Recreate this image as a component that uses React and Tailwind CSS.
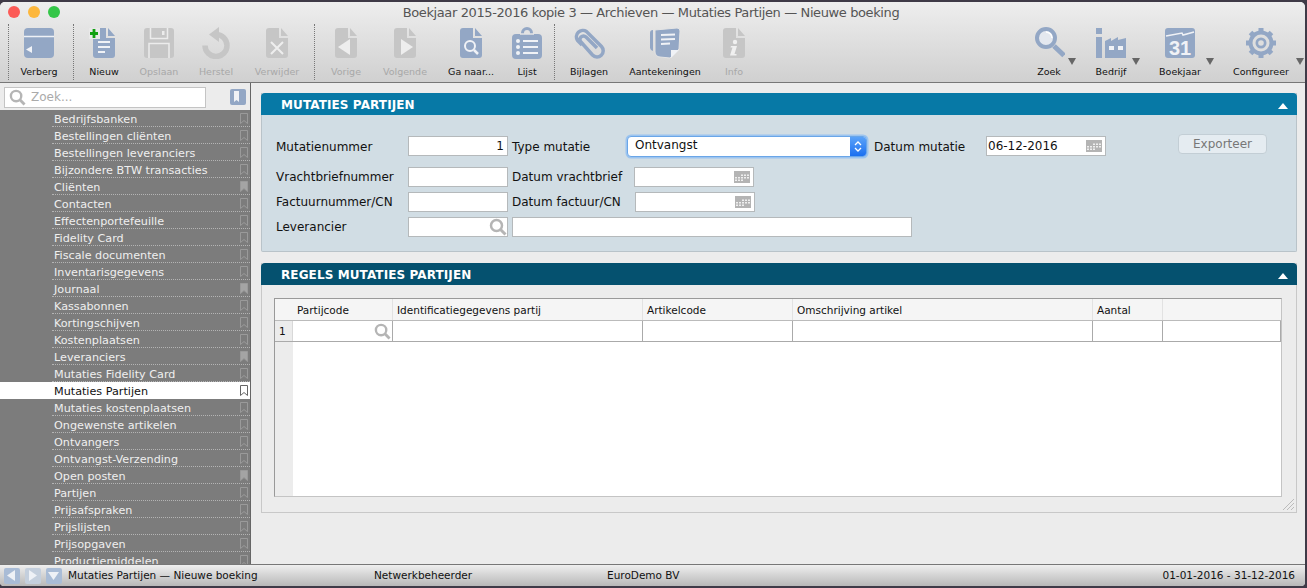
import React from "react";

const BLUE = "#93a7c5";
const GREY = "#c6c6c6";

const Doc = ({ c, children }) => (
  <svg width="32" height="32" viewBox="0 0 32 32">
    <path d="M8 1h10v10h9v17a3 3 0 0 1-3 3H8a3 3 0 0 1-3-3V4a3 3 0 0 1 3-3z" fill={c} />
    <path d="M20 1l7 8h-7z" fill={c} />
    {children}
  </svg>
);

const icons = {
  verberg: (
    <svg width="32" height="32" viewBox="0 0 32 32">
      <rect x="1" y="1" width="30" height="30" rx="4" fill={BLUE} />
      <path d="M1 9.500h30" stroke="#eef1f6" strokeWidth="1.500" />
      <path d="M9 19v7l-6-3.500z" fill="#f1f3f7" />
    </svg>
  ),
  nieuw: (
    <svg width="38" height="32" viewBox="0 0 38 32">
      <path d="M11 1h10v10h9v17a3 3 0 0 1-3 3H11a3 3 0 0 1-3-3V4a3 3 0 0 1 3-3z" fill={BLUE} />
      <path d="M23 1l7 8h-7z" fill={BLUE} />
      <rect x="4" y="1" width="11" height="11" fill="#e9e9e9" />
      <path d="M9 2v9M5 6.500h8" stroke="#12a012" strokeWidth="2.800" />
      <path d="M13 15h12M13 20h12M13 25h7" stroke="#f0f2f6" strokeWidth="2" />
    </svg>
  ),
  opslaan: (
    <svg width="32" height="32" viewBox="0 0 32 32">
      <path d="M4 1h24a3 3 0 0 1 3 3v24a3 3 0 0 1-3 3H4a3 3 0 0 1-3-3V4a3 3 0 0 1 3-3z" fill={GREY} />
      <path d="M7.500 1v10.500h17V1" fill="none" stroke="#ececec" strokeWidth="1.500" />
      <path d="M19 4h2.500v4H19z" fill="#ececec" />
      <path d="M6 31V16.500h20V31" fill="none" stroke="#ececec" strokeWidth="1.500" />
    </svg>
  ),
  herstel: (
    <svg width="32" height="32" viewBox="0 0 32 32">
      <path d="M16 7.500a11 11 0 1 1-11 11" fill="none" stroke={GREY} strokeWidth="5.500" />
      <path d="M19 0v15L9 7.500z" fill={GREY} />
    </svg>
  ),
  verwijder: (
    <Doc c={GREY}>
      <path d="M10 15l12 12M22 15l-12 12" stroke="#eeeeee" strokeWidth="2" />
    </Doc>
  ),
  vorige: (
    <Doc c={GREY}>
      <path d="M20 12v16L8 20z" fill="#eeeeee" />
    </Doc>
  ),
  volgende: (
    <Doc c={GREY}>
      <path d="M12 12v16l12-8z" fill="#eeeeee" />
    </Doc>
  ),
  ganaar: (
    <Doc c={BLUE}>
      <circle cx="15" cy="19" r="5" fill="none" stroke="#f0f2f6" strokeWidth="2" />
      <path d="M19 23l4 4" stroke="#f0f2f6" strokeWidth="2.500" />
    </Doc>
  ),
  lijst: (
    <svg width="32" height="32" viewBox="0 0 32 32">
      <rect x="1" y="7" width="30" height="25" rx="4" fill={BLUE} />
      <circle cx="16" cy="6" r="4.500" fill="none" stroke={BLUE} strokeWidth="3" />
      <path d="M9 7h14" stroke="#e4e4e4" strokeWidth="1.500" />
      <circle cx="7" cy="14" r="2" fill="#f0f2f6" />
      <circle cx="7" cy="20" r="2" fill="#f0f2f6" />
      <circle cx="7" cy="26" r="2" fill="#f0f2f6" />
      <path d="M12 14h15M12 20h15M12 26h15" stroke="#f0f2f6" strokeWidth="2" />
    </svg>
  ),
  bijlagen: (
    <svg width="32" height="32" viewBox="0 0 32 32">
      <path d="M9 18L4.500 13.500a6.500 6.500 0 0 1 9-9l15 15a6 6 0 0 1-9 8.500L8 15a3.500 3.500 0 0 1 5-5l11 11" fill="none" stroke={BLUE} strokeWidth="3.500" />
    </svg>
  ),
  aantekeningen: (
    <svg width="32" height="32" viewBox="0 0 32 32">
      <path d="M1 6a3 3 0 0 1 3-3v21a4 4 0 0 1-3-3z" fill={BLUE} />
      <path d="M6 3l22-2a3 3 0 0 1 3 3l-1 18-9 9-10-1a5 5 0 0 1-5-5z" fill={BLUE} stroke="#e4e4e4" strokeWidth="1" />
      <path d="M12 8l14-.5M12 12.500l14-.5M12 17l9-.5" stroke="#f0f2f6" strokeWidth="2" />
      <path d="M22 31v-8h8z" fill="#f0f2f6" />
    </svg>
  ),
  info: (
    <Doc c={GREY}>
      <circle cx="17" cy="15" r="2.200" fill="#f0f0f0" />
      <path d="M13 19h6l-2.500 8h2v1.500H12l2.500-8h-2z" fill="#f0f0f0" />
    </Doc>
  ),
  zoek: (
    <svg width="32" height="32" viewBox="0 0 32 32">
      <circle cx="13" cy="11" r="9" fill="#e4e8ef" stroke={BLUE} strokeWidth="4" />
      <path d="M13 5a6 6 0 0 1 6 6" fill="none" stroke="#ffffff" strokeWidth="1.500" />
      <path d="M21 19l10 9.500" stroke={BLUE} strokeWidth="5" />
    </svg>
  ),
  bedrijf: (
    <svg width="32" height="32" viewBox="0 0 32 32">
      <rect x="1" y="1" width="6" height="6" fill={BLUE} />
      <rect x="1" y="10" width="6" height="21" fill={BLUE} />
      <path d="M10 14l6-3v3l7-4v3l8-2v20H10z" fill={BLUE} />
      <rect x="14" y="19" width="5" height="4" fill="#f0f2f6" />
      <rect x="23" y="19" width="5" height="4" fill="#f0f2f6" />
    </svg>
  ),
  boekjaar: (
    <svg width="32" height="32" viewBox="0 0 32 32">
      <rect x="1" y="1" width="30" height="30" rx="3" fill={BLUE} />
      <path d="M2 9l16-3 1 2 11-3" fill="none" stroke="#f0f2f6" strokeWidth="1.500" />
      <text x="16" y="28" textAnchor="middle" fontFamily="'Liberation Sans', sans-serif" fontWeight="700" fontSize="20" fill="#f0f2f6">31</text>
    </svg>
  ),
  configureer: (
    <svg width="32" height="32" viewBox="0 0 32 32">
      <circle cx="16" cy="16" r="10" fill={BLUE} stroke={BLUE} strokeWidth="5" />
      <path d="M16 1v30M1 16h30M5.500 5.500l21 21M26.500 5.500l-21 21" stroke={BLUE} strokeWidth="5" />
      <circle cx="16" cy="16" r="8.500" fill="#dedede" />
      <circle cx="16" cy="16" r="5.500" fill={BLUE} />
      <circle cx="16" cy="16" r="2.800" fill="#dedede" />
    </svg>
  ),
};

const Sep = () => <div className="w-px h-[56px] border-l border-dotted border-[#777] self-end mb-[2px]" />;

const Tool = ({ w, label, icon, disabled, menu }) => (
  <div className={`${w} relative flex flex-col items-center shrink-0`}>
    <div className="h-[32px] flex items-center justify-center">{icons[icon]}</div>
    <div className={`mt-[6px] text-[9.500px] leading-[13px] whitespace-nowrap ${disabled ? "text-[#a8a8a8]" : "text-[#111]"}`}>{label}</div>
    {menu && (
      <svg className={`absolute ${menu} top-[31px]`} width="8" height="7" viewBox="0 0 8 7">
        <path d="M0 0h8L4 7z" fill="#666" />
      </svg>
    )}
  </div>
);

const Glass = ({ size = 18, color = "#b5b5b5" }) => (
  <svg width={size} height={size} viewBox="0 0 18 18">
    <circle cx="7.500" cy="7.500" r="5.500" fill="#fff" stroke={color} strokeWidth="2.500" />
    <path d="M11.500 11.500l5 5" stroke={color} strokeWidth="3" />
  </svg>
);

const Cal = () => (
  <svg width="16" height="12" viewBox="0 0 16 12">
    <rect width="16" height="12" fill="#b4b4b4" />
    <path d="M7 3.500h2v1.500H7zM10 3.500h2v1.500h-2zM13 3.500h2v1.500h-2zM1 6h2v1.500H1zM4 6h2v1.500H4zM7 6h2v1.500H7zM10 6h2v1.500h-2zM13 6h2v1.500h-2zM1 8.500h2V10H1zM4 8.500h2V10H4zM7 8.500h2V10H7z" fill="#efefef" />
  </svg>
);

const Mark = ({ on, dark }) => (
  <svg width="8" height="11" viewBox="0 0 8 11" className="shrink-0">
    <path
      d="M.5.500h7v10L4 7.500l-3.500 3z"
      fill={on ? "#a4a4a4" : "none"}
      stroke={dark ? "#666" : "#9a9a9a"}
      strokeWidth="1"
    />
  </svg>
);

const rows = [
  ["Bedrijfsbanken"], ["Bestellingen cliënten"], ["Bestellingen leveranciers"], ["Bijzondere BTW transacties"],
  ["Cliënten", 1], ["Contacten"], ["Effectenportefeuille"], ["Fidelity Card"], ["Fiscale documenten"],
  ["Inventarisgegevens"], ["Journaal", 1], ["Kassabonnen"], ["Kortingschijven"], ["Kostenplaatsen"],
  ["Leveranciers", 1], ["Mutaties Fidelity Card"], ["Mutaties Partijen", 0, 1], ["Mutaties kostenplaatsen"],
  ["Ongewenste artikelen"], ["Ontvangers"], ["Ontvangst-Verzending"], ["Open posten", 1], ["Partijen"],
  ["Prijsafspraken"], ["Prijslijsten"], ["Prijsopgaven"], ["Productiemiddelen"],
];

const Row = ({ name, on, sel }) =>
  sel ? (
    <div className="h-[17px] bg-white flex items-center pl-[54px] pr-[2px] text-[#111] text-[11.200px]">
      <span className="flex-1 whitespace-nowrap pt-[2px]">{name}</span>
      <Mark dark />
    </div>
  ) : (
    <div className="h-[17px] ml-[52px] pl-[2px] pr-[2px] flex items-center border-b border-dotted border-[#b4b4b4] text-[#efefef] text-[11.200px]">
      <span className="flex-1 whitespace-nowrap pt-[2px]">{name}</span>
      <Mark on={on} />
    </div>
  );

const Field = ({ w, children, className = "justify-end" }) => (
  <div className={`${w} h-[20px] bg-white border border-[#b5b9bb] shrink-0 flex items-center px-[3px] ${className}`}>{children}</div>
);

const Label = ({ w, children, className = "" }) => <div className={`${w} shrink-0 text-[#111] whitespace-nowrap ${className}`}>{children}</div>;

const Collapse = () => (
  <svg width="10" height="6" viewBox="0 0 10 6" className="mt-[3px]">
    <path d="M5 0l5 6H0z" fill="#fff" />
  </svg>
);

const PanelHead = ({ color, children }) => (
  <div className={`h-[22px] ${color} rounded-t-[4px] flex items-center pl-[20px] pr-[9px] justify-between`}>
    <span className="text-white font-bold text-[12px] tracking-[0.1px] pt-[2px]">{children}</span>
    <Collapse />
  </div>
);

const cols = [
  ["w-[100px]", "Partijcode", "pl-[4px]"],
  ["w-[250px]", "Identificatiegegevens partij", "pl-[4px]"],
  ["w-[150px]", "Artikelcode", "pl-[4px]"],
  ["w-[300px]", "Omschrijving artikel", "pl-[4px]"],
  ["w-[70px]", "Aantal", "pl-[4px]"],
  ["w-[118px]", "", ""],
];

export default function App() {
  return (
    <div
      className="w-[1307px] h-[588px] overflow-hidden bg-[#3f3a47] pt-[2px] pr-[2px] pb-[2px] text-[12px] leading-[15px]"
      style={{ fontFamily: "'DejaVu Sans', sans-serif" }}
    >
      <div className="h-[584px] bg-[#ececec] rounded-t-[5px] rounded-b-[4px] overflow-hidden flex flex-col">
        {/* Title + toolbar */}
        <div className="h-[81px] shrink-0 border-b border-[#777] bg-gradient-to-b from-[#eeeeee] to-[#d0d0d0]">
          <div className="h-[21px] relative flex items-center justify-center pr-[3px] text-[13px] text-[#555]">
            <div className="absolute left-[8px] top-[4px] flex gap-[8px]">
              <span className="w-[12px] h-[12px] rounded-full bg-[#fc5b57]" />
              <span className="w-[12px] h-[12px] rounded-full bg-[#fdb73c]" />
              <span className="w-[12px] h-[12px] rounded-full bg-[#34c648]" />
            </div>
            <span className="whitespace-nowrap tracking-[-0.39px]">Boekjaar 2015-2016 kopie 3 — Archieven — Mutaties Partijen — Nieuwe boeking</span>
          </div>
          <div className="h-[59px] flex items-start pl-[8px] pt-[4px]">
            <div className="flex h-[55px] items-start">
              <Sep />
              <Tool w="w-[60px]" label="Verberg" icon="verberg" />
              <div className="w-[4px]" />
              <Sep />
              <Tool w="w-[60px]" label="Nieuw" icon="nieuw" />
              <Tool w="w-[50px]" label="Opslaan" icon="opslaan" disabled />
              <Tool w="w-[64px]" label="Herstel" icon="herstel" disabled />
              <Tool w="w-[58px]" label="Verwijder" icon="verwijder" disabled />
              <div className="w-[8px]" />
              <Sep />
              <Tool w="w-[62px]" label="Vorige" icon="vorige" disabled />
              <Tool w="w-[56px]" label="Volgende" icon="volgende" disabled />
              <Tool w="w-[76px]" label="Ga naar..." icon="ganaar" />
              <Tool w="w-[36px]" label="Lijst" icon="lijst" />
              <div className="w-[9px]" />
              <Sep />
              <Tool w="w-[68px]" label="Bijlagen" icon="bijlagen" />
              <Tool w="w-[84px]" label="Aantekeningen" icon="aantekeningen" />
              <Tool w="w-[54px]" label="Info" icon="info" disabled />
            </div>
            <div className="flex-1" />
            <div className="flex items-start">
              <Tool w="w-[62px]" label="Zoek" icon="zoek" menu="right-[4px]" />
              <Tool w="w-[62px]" label="Bedrijf" icon="bedrijf" menu="right-[2px]" />
              <Tool w="w-[76px]" label="Boekjaar" icon="boekjaar" menu="right-[4px]" />
              <Tool w="w-[86px]" label="Configureer" icon="configureer" menu="right-[0px]" />
              <div className="w-px" />
            </div>
          </div>
        </div>

        <div className="flex-1 flex min-h-0">
          {/* Sidebar */}
          <div className="w-[251px] shrink-0 border-r border-[#666] flex flex-col">
            <div className="h-[27px] shrink-0 flex items-start pt-[4px] pl-[4px] pr-[4px] justify-between">
              <div className="w-[202px] h-[21px] bg-white border border-[#c4c4c4] flex items-center pl-[4px] gap-[5px] text-[#aaa] text-[12px]">
                <Glass size={17} />
                <span>Zoek...</span>
              </div>
              <svg width="16" height="16" viewBox="0 0 16 16" className="mt-[2px]">
                <rect width="16" height="16" rx="2" fill={BLUE} />
                <path d="M4 2h5v11l-2.500-2L4 13z" fill="#f0f2f6" />
              </svg>
            </div>
            <div className="flex-1 min-h-0 overflow-hidden bg-[#7c7c7c]">
              {rows.map(([n, on, sel]) => (
                <Row key={n} name={n} on={on} sel={sel} />
              ))}
            </div>
          </div>

          {/* Content */}
          <div className="flex-1 min-w-0 pl-[10px] pr-[8px] pt-[10px]">
            <div className="h-[159px] border-x border-b border-[#b9c3c9] rounded-b-[2px] bg-[#d1dde4]">
              <div className="-mx-px">
                <PanelHead color="bg-[#0779a6]">MUTATIES PARTIJEN</PanelHead>
              </div>
              <div className="pl-[14px]">
                <div className="flex items-center mt-[21px]">
                  <Label w="w-[132px]" className="pt-[2px]">Mutatienummer</Label>
                  <Field w="w-[100px]"><span className="text-[#111]">1</span></Field>
                  <div className="w-[4px]" />
                  <Label w="w-[115px]" className="pt-[2px]">Type mutatie</Label>
                  <div className="w-[240px] h-[21px] -my-[1px] shrink-0 rounded-[4px] bg-white border border-[#6aa6e8] shadow-[0_0_0_1.5px_#9cc4ef] flex items-center overflow-hidden">
                    <span className="flex-1 pl-[7px] -mt-[2px] text-[#111]">Ontvangst</span>
                    <div className="w-[16px] h-full bg-gradient-to-b from-[#5aa2f8] to-[#1a6ff0] flex items-center justify-center">
                      <svg width="8" height="13" viewBox="0 0 8 13">
                        <path d="M1 5l3-3 3 3M1 8l3 3 3-3" fill="none" stroke="#fff" strokeWidth="1.300" />
                      </svg>
                    </div>
                  </div>
                  <div className="w-[7px]" />
                  <Label w="w-[112px]" className="pt-[2px]">Datum mutatie</Label>
                  <Field w="w-[120px]" className="justify-between !pl-[1px]">
                    <span className="text-[#111]">06-12-2016</span>
                    <Cal />
                  </Field>
                  <div className="w-[72px]" />
                  <div className="w-[89px] h-[20px] -mt-[4px] rounded-[4px] bg-[#e5ecf1] border border-[#c3ced5] flex items-center justify-center text-[#777]">Exporteer</div>
                </div>
                <div className="flex items-center mt-[11px]">
                  <Label w="w-[132px]">Vrachtbriefnummer</Label>
                  <Field w="w-[100px]" />
                  <div className="w-[4px]" />
                  <Label w="w-[122px]">Datum vrachtbrief</Label>
                  <Field w="w-[120px]"><Cal /></Field>
                </div>
                <div className="flex items-center mt-[5px]">
                  <Label w="w-[132px]">Factuurnummer/CN</Label>
                  <Field w="w-[100px]" />
                  <div className="w-[4px]" />
                  <Label w="w-[123px]">Datum factuur/CN</Label>
                  <Field w="w-[120px]"><Cal /></Field>
                </div>
                <div className="flex items-center mt-[5px]">
                  <Label w="w-[132px]">Leverancier</Label>
                  <Field w="w-[100px]" className="justify-end !pr-[0px]"><Glass size={18} /></Field>
                  <div className="w-[4px]" />
                  <Field w="w-[400px]" />
                </div>
              </div>
            </div>

            <div className="mt-[11px] h-[250px] border-x border-b border-[#c8c8c8] relative">
              <div className="-mx-px">
                <PanelHead color="bg-[#05516f]">REGELS MUTATIES PARTIJEN</PanelHead>
              </div>
              <div className="ml-[12px] mr-[14px] mt-[13px] h-[199px] border border-[#999] border-b-[#c4c4c4] border-r-[#c4c4c4] bg-white flex flex-col text-[10.500px]">
                <div className="h-[22px] shrink-0 flex bg-[#f5f5f5] border-b border-[#bbb]">
                  <div className="w-[18px] shrink-0" />
                  {cols.map(([w, t, p], i) => (
                    <div key={i} className={`${w} shrink-0 flex items-center pt-[1px] ${i < 5 ? "border-r border-[#e2e2e2]" : ""} ${p} text-[#111]`}>{t}</div>
                  ))}
                </div>
                <div className="h-[21px] shrink-0 flex border-b border-[#aaa]">
                  <div className="w-[18px] shrink-0 bg-[#ececec] pl-[4px] flex items-center text-[#111] border-r border-[#d8d8d8]">1</div>
                  {cols.map(([w], i) => (
                    <div key={i} className={`${w} shrink-0 flex items-center justify-end border-r border-[#aaa]`}>
                      {i === 0 && <span className="pr-[1px]"><Glass size={17} /></span>}
                    </div>
                  ))}
                </div>
                <div className="flex-1 flex min-h-0">
                  <div className="w-[18px] bg-[#ececec]" />
                </div>
              </div>
              <svg className="absolute right-[1px] bottom-[1px]" width="13" height="13" viewBox="0 0 13 13">
                <path d="M1 12L12 1M5 12l7-7M9 12l3-3" stroke="#bbb" strokeWidth="1" />
              </svg>
            </div>
          </div>
        </div>

        {/* Status bar */}
        <div className="h-[22px] shrink-0 border-t border-[#777] bg-gradient-to-b from-[#efefef] to-[#b8b8b8] flex items-center text-[10.500px] text-[#111]">
          <div className="w-[68px] shrink-0 flex pl-[4px] gap-[5px]">
            {[
              ["M11 2v11L3 7.500z", "#a9bcd6"],
              ["M4 2v11l8-5.500z", "#c4cfdd"],
              ["M2 4h11L7.500 12z", "#a9bcd6"],
            ].map(([d, c], i) => (
              <svg key={i} width="16" height="16" viewBox="0 0 16 16">
                <rect width="16" height="16" rx="2" fill={c} />
                <path d={d} fill="#eef1f6" />
              </svg>
            ))}
          </div>
          <div className="w-[306px] shrink-0 whitespace-nowrap">Mutaties Partijen — Nieuwe boeking</div>
          <div className="w-[233px] shrink-0 whitespace-nowrap">Netwerkbeheerder</div>
          <div className="flex-1 whitespace-nowrap">EuroDemo BV</div>
          <div className="pr-[10px] whitespace-nowrap">01-01-2016 - 31-12-2016</div>
        </div>
      </div>
    </div>
  );
}
